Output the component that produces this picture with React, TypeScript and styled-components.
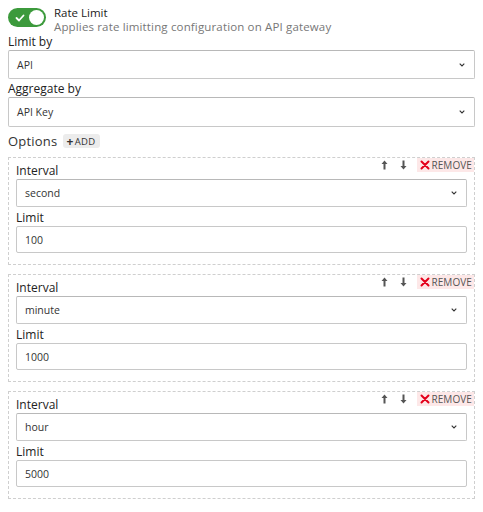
import React from "react";
import styled, { createGlobalStyle } from "styled-components";

const Global = createGlobalStyle`
  html, body { background: #fff; }
  body {
    margin: 8px;
    font-family: "Open Sans", "Liberation Sans", sans-serif;
    color: #222;
  }
  * { box-sizing: border-box; }
`;

const Page = styled.div`
  display: flex;
  flex-direction: column;
`;

const Header = styled.div`
  display: flex;
  align-items: flex-start;
  gap: 8px;
  margin-top: -2px;
`;

const Toggle = styled.div`
  width: 38px;
  height: 19px;
  margin-top: 2px;
  border-radius: 10px;
  background: #3c9a3c;
  display: flex;
  align-items: center;
  justify-content: space-between;
  padding: 0 2px 0 7px;
  flex-shrink: 0;
`;

const Knob = styled.div`
  width: 15px;
  height: 15px;
  border-radius: 50%;
  background: #fff;
`;

const HeaderText = styled.div`
  display: flex;
  flex-direction: column;
`;

const Title = styled.div`
  font-size: 11.5px;
  line-height: 14px;
  font-weight: 500;
  color: #222;
`;

const Subtitle = styled.div`
  font-size: 11.5px;
  line-height: 14px;
  letter-spacing: 0.15px;
  color: #777;
`;

const Field = styled.div<{ $gapTop?: number }>`
  display: flex;
  flex-direction: column;
  margin-top: ${(p) => p.$gapTop ?? 0}px;
`;

const Label = styled.div<{ $h?: number }>`
  font-size: 12px;
  line-height: ${(p) => p.$h ?? 16}px;
  color: #222;
`;

const SelectBox = styled.div<{ $h?: number }>`
  height: ${(p) => p.$h ?? 29}px;
  border: 1px solid #c8c8c8;
  border-top-color: #b8b8b8;
  border-radius: 2px;
  display: flex;
  align-items: center;
  justify-content: space-between;
  padding: 0 9px 0 8px;
  font-size: 10.5px;
  color: #333;
  background: #fff;
`;

const TextInput = styled.input`
  height: 27px;
  width: 100%;
  border: 1px solid #c8c8c8;
  border-radius: 2px;
  padding: 0 8px;
  font-family: inherit;
  font-size: 10.5px;
  color: #333;
  outline: none;
`;

const OptionsRow = styled.div`
  display: flex;
  align-items: center;
  gap: 6px;
  height: 22px;
  margin: 3px 0 5px;
`;

const OptionsTitle = styled.span`
  font-size: 13px;
  letter-spacing: 0.2px;
  color: #333;
`;

const AddButton = styled.span`
  display: inline-flex;
  align-items: center;
  height: 14px;
  padding: 0 4px 0 3px;
  background: #ececec;
  border-radius: 3px;
  font-size: 9.5px;
  color: #333;
  letter-spacing: 0.4px;
  b {
    font-size: 12px;
    font-weight: 700;
    margin-right: 1px;
  }
`;

const CardList = styled.div`
  display: flex;
  flex-direction: column;
  gap: 9px;
`;

const Card = styled.div`
  position: relative;
  height: 108px;
  border: 1px dashed #cfcfcf;
  padding: 4px 7px 11px;
  display: flex;
  flex-direction: column;
`;

const Controls = styled.div`
  position: absolute;
  top: 0;
  right: 0;
  display: flex;
  align-items: center;
  height: 14px;
`;

const ArrowBtn = styled.span`
  width: 19px;
  display: flex;
  justify-content: center;
  color: #555;
`;

const RemoveBtn = styled.span`
  display: flex;
  align-items: center;
  height: 14px;
  background: #fde8e8;
  padding: 0 2px 0 3px;
  margin-left: 4px;
  font-size: 10px;
  letter-spacing: 0.1px;
  color: #555;
`;

const Chevron = () => (
  <svg width="6" height="4" viewBox="0 0 6 4">
    <path d="M0.7 0.7l2.3 2.3 2.3-2.3" stroke="#333" strokeWidth="1.1" fill="none" />
  </svg>
);

const Arrow = ({ down }: { down?: boolean }) => (
  <svg width="7" height="10" viewBox="0 0 7 10" style={down ? { transform: "rotate(180deg)" } : undefined}>
    <path d="M3.5 0.5L6.5 4H4.5V9.5H2.5V4H0.5Z" fill="#555" />
  </svg>
);

const RedX = () => (
  <svg width="10" height="10" viewBox="0 0 10 10" style={{ marginRight: 1 }}>
    <path d="M1.5 1.5l7 7M8.5 1.5l-7 7" stroke="#e3001b" strokeWidth="2" strokeLinecap="round" />
  </svg>
);

const Check = () => (
  <svg width="10" height="8" viewBox="0 0 10 8">
    <path d="M1.5 4l2.5 2.5 4.5-5" stroke="#fff" strokeWidth="1.8" fill="none" strokeLinecap="round" strokeLinejoin="round" />
  </svg>
);

const options = [
  { interval: "second", limit: "100" },
  { interval: "minute", limit: "1000" },
  { interval: "hour", limit: "5000" },
];

export default function App() {
  return (
    <Page>
      <Global />
      <Header>
        <Toggle>
          <Check />
          <Knob />
        </Toggle>
        <HeaderText>
          <Title>Rate Limit</Title>
          <Subtitle>Applies rate limitting configuration on API gateway</Subtitle>
        </HeaderText>
      </Header>
      <Field>
        <Label>Limit by</Label>
        <SelectBox>
          <span>API</span>
          <Chevron />
        </SelectBox>
      </Field>
      <Field $gapTop={2}>
        <Label>Aggregate by</Label>
        <SelectBox $h={30}>
          <span>API Key</span>
          <Chevron />
        </SelectBox>
      </Field>
      <OptionsRow>
        <OptionsTitle>Options</OptionsTitle>
        <AddButton>
          <b>+</b>ADD
        </AddButton>
      </OptionsRow>
      <CardList>
        {options.map((o) => (
          <Card key={o.interval}>
            <Controls>
              <ArrowBtn>
                <Arrow />
              </ArrowBtn>
              <ArrowBtn>
                <Arrow down />
              </ArrowBtn>
              <RemoveBtn>
                <RedX />
                REMOVE
              </RemoveBtn>
            </Controls>
            <Label $h={17}>Interval</Label>
            <SelectBox $h={28}>
              <span>{o.interval}</span>
              <Chevron />
            </SelectBox>
            <Field $gapTop={2}>
              <Label $h={17}>Limit</Label>
              <TextInput defaultValue={o.limit} />
            </Field>
          </Card>
        ))}
      </CardList>
    </Page>
  );
}
